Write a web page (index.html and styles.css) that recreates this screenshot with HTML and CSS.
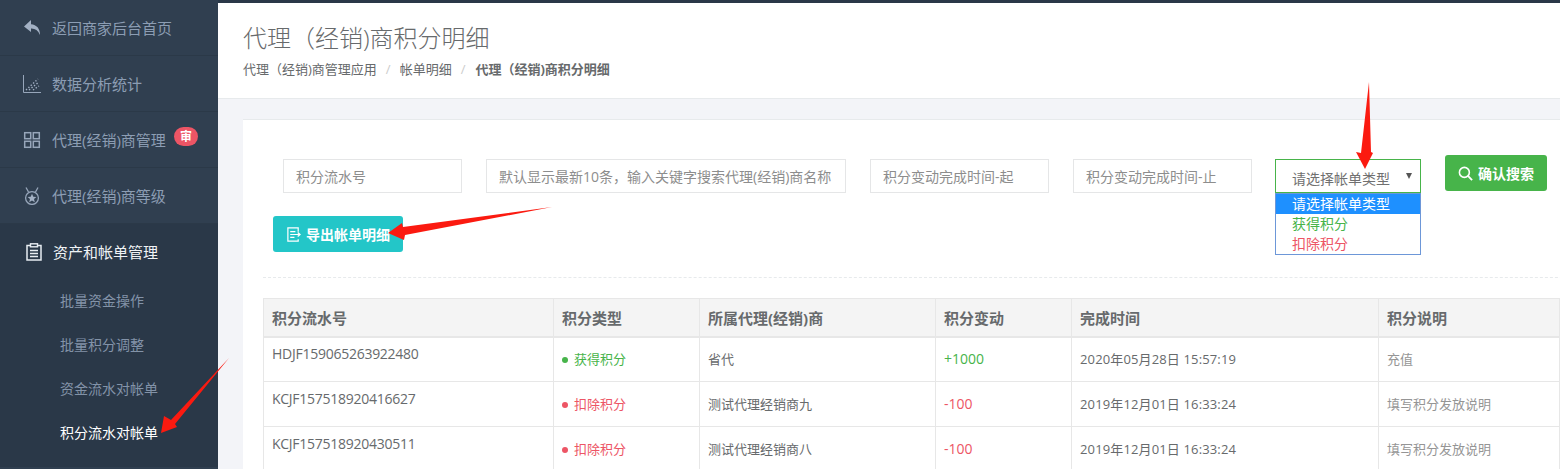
FILE: index.html
```html
<!DOCTYPE html>
<html lang="zh-CN">

<head>
    <meta charset="UTF-8">
    <title>代理（经销)商积分明细</title>
    <link rel="stylesheet" href="styles.css">
</head>

<body>
    <div class="page">
        <aside class="sidebar">
            <a class="nav-item">
                <svg class="nav-icon" viewBox="0 0 18 18"><path fill="#a3b1c4" d="M8 1 L1 7.5 L8 13 V9.6 C12 9.4 15 11.5 17 16 C17.2 9.5 13.5 5.6 8 5.2 Z" /></svg>
                返回商家后台首页
            </a>
            <a class="nav-item">
                <svg class="nav-icon" viewBox="0 0 18 18"><path fill="none" stroke="#97a6ba" d="M0.5 0 V17.5 H18" /><path fill="none" stroke="#a3b1c4" stroke-width="1.4" stroke-dasharray="1.4 1.8" d="M3 15 L15 4 M6 15 L16 7 M10 15 L16 11" /></svg>
                数据分析统计
            </a>
            <a class="nav-item nav-badged">
                <svg class="nav-icon" viewBox="0 0 18 18"><g fill="none" stroke="#97a6ba" stroke-width="1.5"><rect x="1.7" y="1.7" width="6" height="6" /><rect x="10.3" y="1.7" width="6" height="6" /><rect x="1.7" y="10.3" width="6" height="6" /><rect x="10.3" y="10.3" width="6" height="6" /></g></svg>
                代理(经销)商管理
                <span class="badge">审</span>
            </a>
            <a class="nav-item">
                <svg class="nav-icon" viewBox="0 0 18 18"><circle cx="9" cy="11" r="6.4" fill="none" stroke="#97a6ba" stroke-width="1.3" /><path fill="none" stroke="#97a6ba" stroke-width="1.3" d="M3 0.5 L5.5 5 M15 0.5 L12.5 5" /><path fill="#a3b1c4" d="M9 6.8 L10.3 9.8 L13.4 10.1 L11 12.1 L11.8 15.2 L9 13.5 L6.2 15.2 L7 12.1 L4.6 10.1 L7.7 9.8 Z" /></svg>
                代理(经销)商等级
            </a>
            <div class="nav-group">
                <a class="nav-item nav-open">
                    <svg class="nav-icon" viewBox="0 0 18 18"><path fill="none" stroke="#e8edf2" stroke-width="1.5" d="M5 2.5 H2 V17 H16 V2.5 H13" /><rect x="5.5" y="0.8" width="7" height="3" fill="none" stroke="#e8edf2" stroke-width="1.4" /><path stroke="#e8edf2" stroke-width="1.5" d="M5 7.5 H13 M5 10.5 H13 M5 13.5 H13" /></svg>
                    资产和帐单管理
                </a>
                <a class="sub-item">批量资金操作</a>
                <a class="sub-item">批量积分调整</a>
                <a class="sub-item">资金流水对帐单</a>
                <a class="sub-item active">积分流水对帐单</a>
            </div>
        </aside>

        <main class="main">
            <header class="page-head">
                <h1>代理（经销)商积分明细</h1>
                <ol class="crumbs">
                    <li>代理（经销)商管理应用</li>
                    <li class="sep">/</li>
                    <li>帐单明细</li>
                    <li class="sep">/</li>
                    <li class="current">代理（经销)商积分明细</li>
                </ol>
            </header>

            <section class="card">
                <div class="filters">
                    <input class="field w-179" placeholder="积分流水号">
                    <input class="field w-360" placeholder="默认显示最新10条，输入关键字搜索代理(经销)商名称">
                    <input class="field w-179" placeholder="积分变动完成时间-起">
                    <input class="field w-179" placeholder="积分变动完成时间-止">
                    <div class="select">
                        <span>请选择帐单类型</span>
                        <i class="caret"></i>
                        <ul class="options">
                            <li class="selected">请选择帐单类型</li>
                            <li class="green">获得积分</li>
                            <li class="red">扣除积分</li>
                        </ul>
                    </div>
                    <button class="btn btn-green">
                        <svg viewBox="0 0 16 16" class="btn-icon"><circle cx="6.8" cy="6.8" r="5.3" fill="none" stroke="#fff" stroke-width="1.7" /><path stroke="#fff" stroke-width="2" d="M10.6 10.6 L15 15" /></svg>
                        确认搜索
                    </button>
                </div>
                <div class="export-row">
                    <button class="btn btn-teal">
                        <svg viewBox="0 0 16 16" class="btn-icon"><path fill="none" stroke="#fff" stroke-width="1.3" d="M13 5 V1 H2 V15 H13 V13" /><path stroke="#fff" stroke-width="1.3" fill="none" d="M4.5 5 H10 M4.5 8 H15 M12.5 5.8 L15 8 L12.5 10.2 M4.5 11 H9" /></svg>
                        导出帐单明细
                    </button>
                </div>
                <table class="grid">
                    <colgroup>
                        <col class="c1">
                        <col class="c2">
                        <col class="c3">
                        <col class="c4">
                        <col class="c5">
                        <col class="c6">
                    </colgroup>
                    <thead>
                        <tr>
                            <th>积分流水号</th>
                            <th>积分类型</th>
                            <th>所属代理(经销)商</th>
                            <th>积分变动</th>
                            <th>完成时间</th>
                            <th>积分说明</th>
                        </tr>
                    </thead>
                    <tbody>
                        <tr>
                            <td class="serial">HDJF159065263922480</td>
                            <td class="green"><i class="dot"></i>获得积分</td>
                            <td>省代</td>
                            <td class="green amount">+1000</td>
                            <td class="time">2020年05月28日 15:57:19</td>
                            <td class="note">充值</td>
                        </tr>
                        <tr>
                            <td class="serial">KCJF157518920416627</td>
                            <td class="red"><i class="dot"></i>扣除积分</td>
                            <td>测试代理经销商九</td>
                            <td class="red amount">-100</td>
                            <td class="time">2019年12月01日 16:33:24</td>
                            <td class="note">填写积分发放说明</td>
                        </tr>
                        <tr>
                            <td class="serial">KCJF157518920430511</td>
                            <td class="red"><i class="dot"></i>扣除积分</td>
                            <td>测试代理经销商八</td>
                            <td class="red amount">-100</td>
                            <td class="time">2019年12月01日 16:33:24</td>
                            <td class="note">填写积分发放说明</td>
                        </tr>
                    </tbody>
                </table>
            </section>
        </main>

        <!-- red annotation arrows drawn over the screenshot -->
        <svg class="arrows" viewBox="0 0 1560 469">
            <polygon points="229,358 175,424 177,427 161,433 164,416 171,420" />
            <polygon points="552,207 405,235 404,240 388,233 402,223 403,227" />
            <polygon points="1369,82 1371,152 1373,153 1365,169 1356,152 1361,153" />
        </svg>
    </div>
</body>

</html>
```

FILE: styles.css
```css
* {
    margin: 0;
    padding: 0;
    box-sizing: border-box;
}

html,
body {
    height: 100%;
    overflow: hidden;
    font-family: 'Open Sans', 'Noto Sans CJK SC', sans-serif;
    color: #676a6c;
}

.page {
    position: relative;
    display: flex;
    width: 1560px;
    height: 469px;
    overflow: hidden;
    background: #f3f4f8;
}

/* sidebar */
.sidebar {
    flex: 0 0 218px;
    background: #303f50;
}

.nav-item {
    position: relative;
    display: flex;
    align-items: center;
    gap: 11px;
    height: 56px;
    padding-left: 23px;
    border-bottom: 1px solid #2b3948;
    font-size: 15px;
    color: #8c9db3;
}

.nav-icon {
    width: 18px;
    height: 18px;
    flex: none;
}

.badge {
    position: absolute;
    left: 174px;
    top: 15px;
    width: 24px;
    height: 19px;
    border-radius: 10px;
    background: #ed5565;
    color: #fff;
    font-size: 12px;
    font-weight: 700;
    line-height: 19px;
    text-align: center;
}

.nav-group {
    height: 243px;
    background: #2a3848;
}

.nav-open {
    height: 55px;
    gap: 10px;
    padding-left: 25px;
    border-bottom: 0;
    color: #f0f3f6;
}

.sub-item {
    display: block;
    height: 44px;
    padding-left: 60px;
    font-size: 14px;
    line-height: 44px;
    color: #8393a8;
}

.sub-item.active {
    color: #fff;
}

/* content */
.main {
    flex: 1;
    min-width: 0;
    border-top: 3px solid #2a3848;
}

.page-head {
    height: 96px;
    padding: 17px 0 0 25px;
    background: #fff;
    border-bottom: 1px solid #e7eaec;
}

.page-head h1 {
    font-size: 24px;
    font-weight: 300;
    line-height: 36px;
    color: #676a6c;
}

.crumbs {
    display: flex;
    gap: 9px;
    margin-top: 3px;
    list-style: none;
    font-size: 13px;
    line-height: 20px;
}

.crumbs .sep {
    color: #ccc;
}

.crumbs .current {
    margin-left: 1px;
    font-weight: 700;
}

.card {
    width: 1400px;
    height: 400px;
    margin: 20px 0 0 25px;
    padding: 35px 20px 0;
    background: #fff;
    border-top: 1px solid #e7eaec;
}

.filters {
    display: flex;
    align-items: flex-start;
    gap: 24px;
    padding-left: 20px;
}

.field {
    height: 34px;
    margin-top: 4px;
    padding: 0 12px;
    border: 1px solid #e5e6e7;
    font: inherit;
    font-size: 14px;
    color: #676a6c;
    outline: none;
}

.field::placeholder {
    color: #8d8d8d;
}

.w-179 {
    width: 179px;
}

.w-360 {
    width: 360px;
}

.select {
    position: relative;
    display: flex;
    align-items: center;
    justify-content: space-between;
    width: 146px;
    height: 34px;
    margin: 4px 0 0 -1px;
    padding: 3px 8px 0 16px;
    border: 1px solid #47b44a;
    font-size: 14px;
    color: #707070;
}

.caret {
    margin-top: -3px;
    border-left: 3.5px solid transparent;
    border-right: 3.5px solid transparent;
    border-top: 6px solid #555;
}

.options {
    position: absolute;
    left: -1px;
    top: 33px;
    width: 146px;
    height: 62px;
    list-style: none;
    background: #fff;
    border: 1px solid #6d97d8;
    line-height: 20px;
}

.options li {
    padding-left: 16px;
}

.options .selected {
    background: #1e90ff;
    color: #fff;
}

.green {
    color: #47b44a;
}

.red {
    color: #ed5565;
}

.btn {
    display: flex;
    align-items: center;
    justify-content: center;
    gap: 5px;
    height: 36px;
    border: 0;
    border-radius: 3px;
    color: #fff;
    font: inherit;
    font-size: 14px;
    font-weight: 600;
}

.btn-icon {
    width: 15px;
    height: 15px;
}

.btn-green {
    width: 102px;
    background: #47b44a;
}

.btn-teal {
    width: 130px;
    background: #23c6c8;
}

.export-row {
    height: 62px;
    margin-top: 23px;
    padding-left: 10px;
    border-bottom: 1px dashed #e7eaec;
}

.grid {
    width: 1297px;
    margin-top: 20px;
    border-collapse: collapse;
    table-layout: fixed;
}

.c1 { width: 290px; }
.c2 { width: 146px; }
.c3 { width: 236px; }
.c4 { width: 136px; }
.c5 { width: 307px; }

.grid th,
.grid td {
    padding: 0 8px;
    border: 1px solid #e7e7e7;
    text-align: left;
    font-size: 13px;
}

.grid th {
    height: 38px;
    background: #f4f4f4;
    font-size: 15px;
    font-weight: 700;
    border-bottom-width: 2px;
}

.grid td {
    height: 45px;
    padding-bottom: 2px;
}

.grid .serial {
    padding: 0 8px 11px;
    font-size: 14px;
    letter-spacing: -0.26px;
}

.grid td.green {
    color: #47b44a;
}

.grid td.red {
    color: #ed5565;
}

.grid .amount {
    font-size: 14px;
}

.grid .time {
    letter-spacing: 0.14px;
}

.grid .note {
    color: #959595;
}

.dot {
    display: inline-block;
    width: 6px;
    height: 6px;
    margin-right: 6px;
    border-radius: 50%;
    background: currentColor;
    vertical-align: 1px;
}

.arrows {
    position: absolute;
    left: 0;
    top: 0;
    width: 1560px;
    height: 469px;
    pointer-events: none;
}

.arrows polygon {
    fill: #fb1a10;
}
```
